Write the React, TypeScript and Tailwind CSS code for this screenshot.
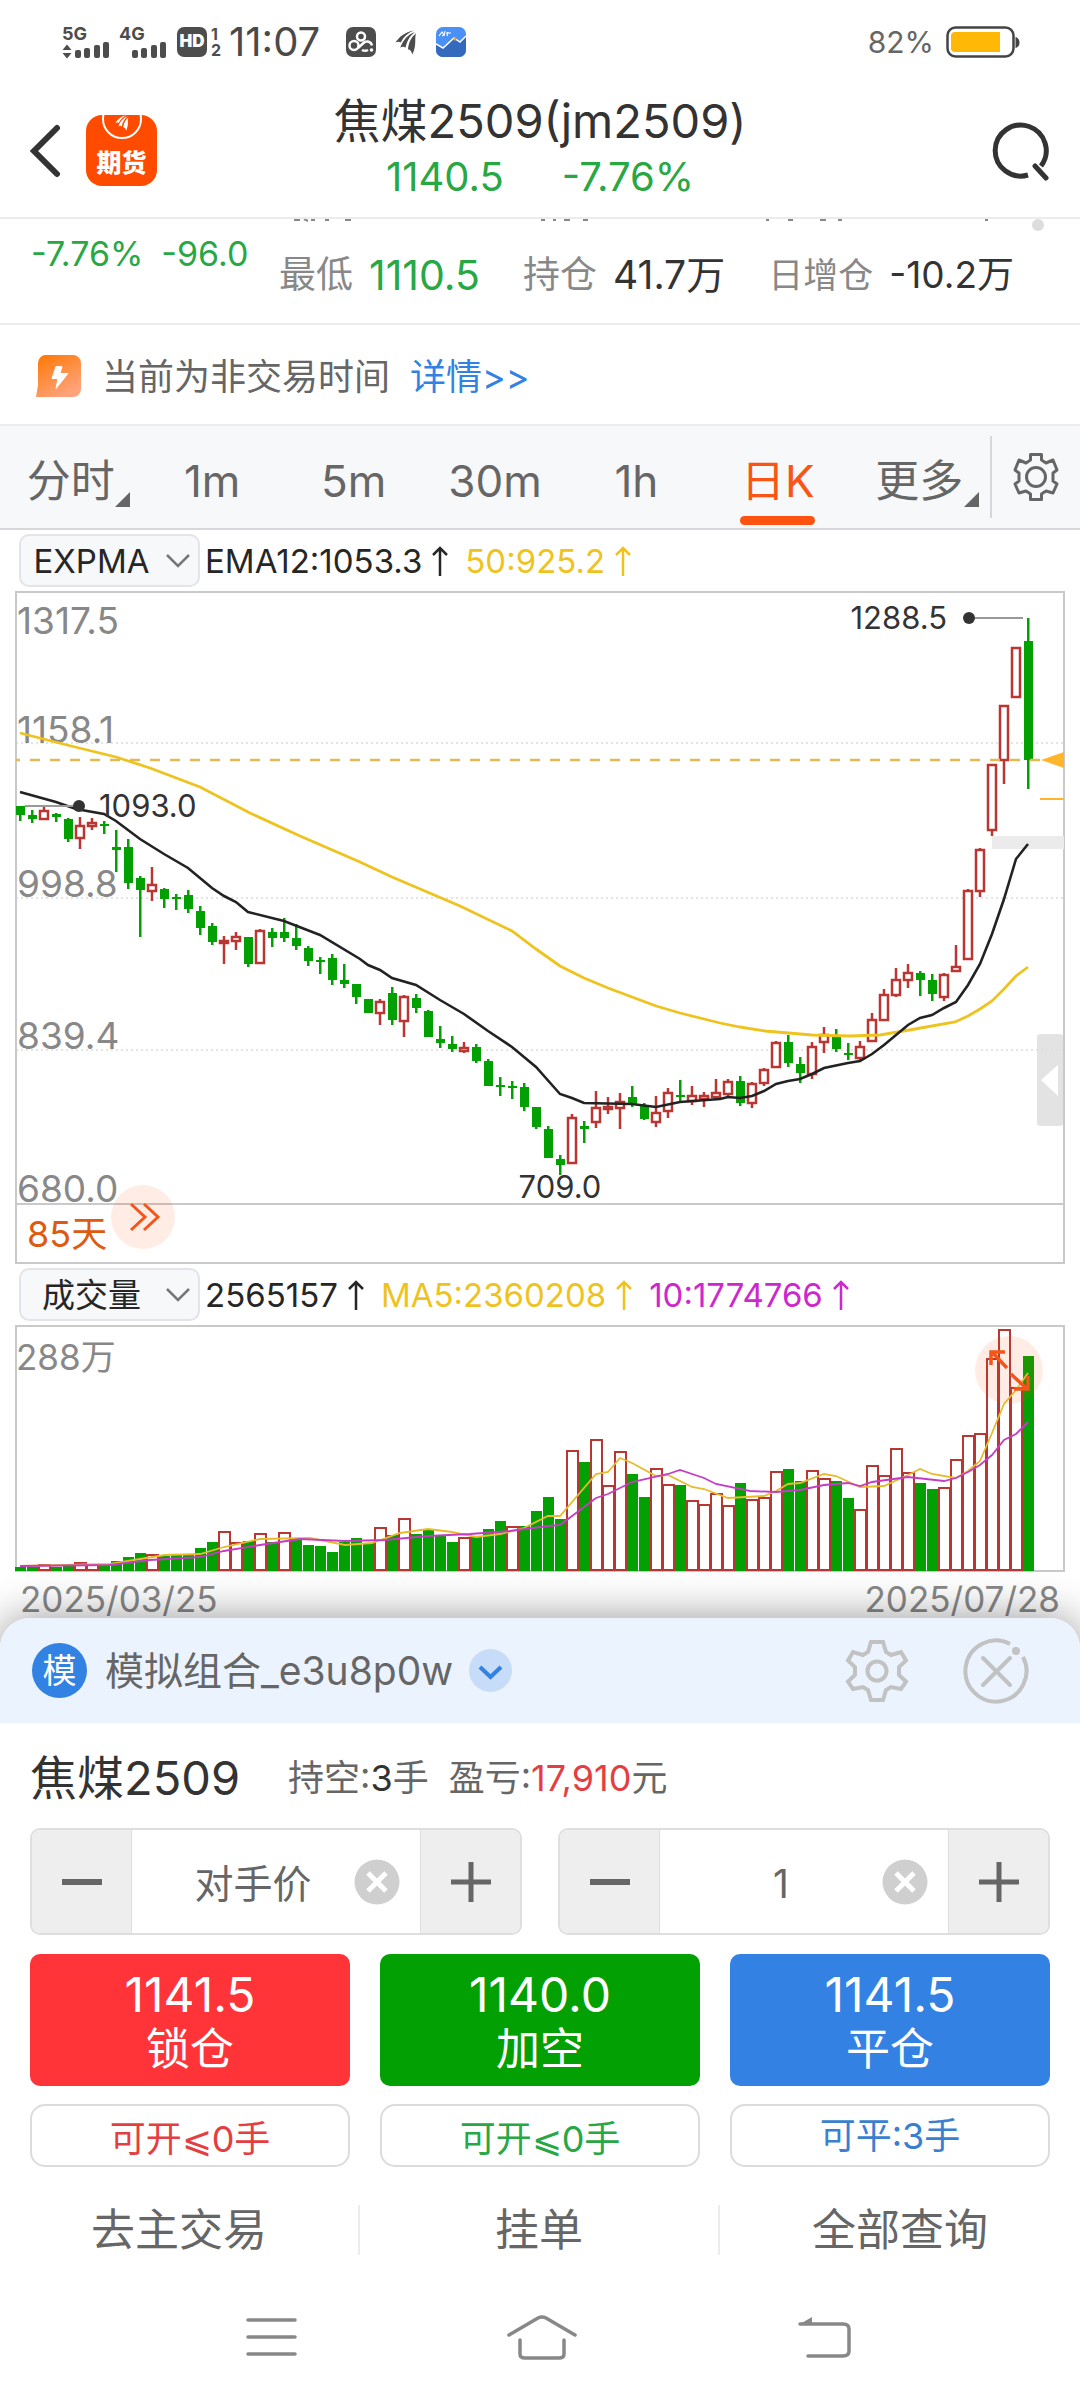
import React, { useState } from "react";

type Candle = [dir: "u" | "d", high: number, top: number, bottom: number, low: number, volume: number, volDir?: "u" | "d"];

/* One entry per trading day: direction, wick top, body top, body bottom, wick bottom, volume bar top */
const DAYS: Candle[] = [
  ["d", 806, 806, 815, 821, 1565], ["d", 810, 815, 819, 823, 1565], ["u", 806, 810, 819, 819, 1563], ["d", 813, 814, 817, 822, 1565],
  ["d", 818, 819, 839, 842, 1563], ["u", 817, 825, 838, 849, 1561], ["u", 818, 822, 826, 830, 1563], ["d", 821, 824, 825, 834, 1564],
  ["d", 830, 847, 850, 872, 1559], ["d", 839, 847, 883, 889, 1555], ["d", 876, 878, 890, 937, 1551], ["u", 867, 884, 891, 901, 1553],
  ["d", 888, 889, 899, 908, 1554], ["d", 894, 897, 898, 910, 1553], ["d", 890, 895, 909, 913, 1553], ["d", 906, 911, 928, 935, 1546],
  ["d", 923, 926, 942, 945, 1540], ["u", 936, 940, 943, 964, 1530], ["u", 932, 936, 941, 950, 1541], ["d", 937, 937, 964, 967, 1539],
  ["u", 929, 930, 963, 963, 1532], ["d", 928, 932, 938, 947, 1540], ["d", 918, 932, 938, 942, 1531, "u"], ["d", 924, 938, 946, 950, 1536],
  ["d", 946, 948, 961, 966, 1543], ["d", 957, 960, 962, 974, 1544], ["d", 954, 958, 980, 985, 1550], ["d", 964, 980, 984, 988, 1540],
  ["d", 984, 984, 997, 1004, 1536], ["d", 999, 999, 1013, 1013, 1541], ["u", 999, 1001, 1013, 1025, 1526], ["d", 987, 993, 1020, 1025, 1533],
  ["u", 995, 996, 1021, 1037, 1517], ["d", 994, 998, 1008, 1013, 1532], ["d", 1010, 1011, 1037, 1037, 1528], ["d", 1026, 1039, 1043, 1048, 1534],
  ["d", 1036, 1044, 1049, 1052, 1540], ["u", 1042, 1047, 1051, 1053, 1536], ["d", 1044, 1047, 1061, 1063, 1534], ["d", 1059, 1061, 1086, 1086, 1527],
  ["d", 1077, 1085, 1087, 1096, 1519], ["d", 1081, 1086, 1088, 1099, 1525, "u"], ["d", 1083, 1087, 1107, 1111, 1524], ["d", 1107, 1107, 1127, 1129, 1509],
  ["d", 1126, 1129, 1158, 1158, 1495], ["d", 1155, 1159, 1165, 1175, 1517], ["u", 1114, 1117, 1163, 1163, 1449], ["d", 1121, 1126, 1129, 1143, 1460],
  ["u", 1091, 1107, 1122, 1128, 1438], ["u", 1097, 1106, 1108, 1114, 1484], ["u", 1093, 1101, 1108, 1129, 1450], ["d", 1086, 1097, 1104, 1107, 1472],
  ["d", 1103, 1106, 1119, 1120, 1495], ["u", 1096, 1112, 1122, 1127, 1467], ["u", 1088, 1092, 1111, 1118, 1483], ["d", 1080, 1095, 1097, 1102, 1483],
  ["u", 1086, 1095, 1101, 1105, 1499], ["u", 1092, 1095, 1099, 1107, 1503], ["u", 1079, 1092, 1097, 1100, 1492], ["u", 1079, 1081, 1094, 1098, 1504],
  ["d", 1076, 1081, 1103, 1106, 1481], ["u", 1082, 1083, 1103, 1108, 1498], ["u", 1068, 1069, 1083, 1086, 1496], ["u", 1041, 1042, 1067, 1067, 1470],
  ["d", 1035, 1042, 1063, 1067, 1467], ["d", 1057, 1064, 1073, 1083, 1479], ["u", 1042, 1046, 1074, 1079, 1469], ["u", 1027, 1034, 1042, 1053, 1477],
  ["d", 1029, 1037, 1049, 1052, 1479], ["d", 1043, 1053, 1054, 1060, 1496], ["u", 1041, 1046, 1058, 1060, 1508], ["u", 1013, 1019, 1041, 1042, 1464],
  ["u", 989, 994, 1020, 1020, 1474], ["u", 968, 979, 995, 997, 1447], ["u", 964, 972, 980, 988, 1471], ["d", 971, 973, 980, 996, 1481],
  ["d", 974, 980, 994, 1001, 1487], ["u", 973, 974, 997, 1001, 1486], ["u", 945, 966, 971, 972, 1458], ["u", 889, 890, 959, 960, 1434],
  ["u", 848, 849, 891, 897, 1432], ["u", 764, 764, 830, 836, 1357], ["u", 705, 705, 760, 784, 1328], ["u", 647, 647, 697, 697, 1386],
  ["d", 618, 641, 760, 789, 1354],
];

const EMA50 =
  "20,733 67,745 116,757 150,768 200,787 250,813 300,836 360,862 392,877 460,906 512,931 536,949 560,966 584,978 608,988 632,997 656,1006 680,1013 720,1023 740,1027 765,1031 812,1035 850,1036 880,1035 915,1029 955,1022 968,1016 980,1009 992,1001 1004,989 1016,976 1028,967";
const EMA12 =
  "20,792 56,802 76,809 104,814 116,821 140,839 164,854 188,868 212,888 224,896 236,902 248,912 284,921 320,935 360,959 368,965 380,970 392,978 416,985 440,1000 464,1014 488,1031 512,1047 536,1067 560,1094 572,1098 584,1103 632,1104 656,1107 680,1102 720,1099 728,1097 740,1098 752,1096 764,1091 776,1084 788,1081 800,1079 812,1074 824,1068 848,1063 860,1061 872,1054 884,1045 896,1035 908,1025 920,1018 932,1015 944,1008 956,1002 968,985 980,964 992,934 1004,899 1016,859 1028,844";
const MA5 =
  "20,1564 110,1562 140,1557 165,1553 200,1552 224,1545 260,1537 310,1536 345,1543 372,1541 400,1531 428,1527 452,1530 476,1535 500,1532 524,1526 548,1514 560,1514 584,1486 596,1472 608,1470 620,1456 632,1461 656,1474 668,1473 692,1485 704,1487 728,1496 764,1494 776,1489 788,1482 800,1481 824,1472 836,1474 860,1485 884,1484 908,1473 920,1467 932,1472 956,1476 968,1469 980,1459 992,1431 1004,1402 1016,1388 1028,1371";
const MA10 =
  "20,1564 110,1563 150,1558 200,1555 224,1549 260,1543 300,1537 345,1539 385,1538 428,1534 470,1532 510,1529 548,1524 560,1523 596,1496 608,1492 632,1480 668,1472 680,1468 704,1476 716,1482 750,1489 776,1490 800,1488 824,1483 848,1481 860,1484 872,1480 908,1475 944,1479 956,1476 968,1470 980,1463 992,1453 1004,1438 1016,1432 1028,1420";

const RED = "#b93632";
const GREEN = "#03a003";

function WingMark({ className }: { className: string }) {
  return (
    <svg viewBox="0 0 24 26" className={className} fill="currentColor" aria-hidden="true">
      <path d="M1 13 C5 7 11 2 20 0.500 C14 3 9.500 7 6.500 13 C5 12 3 12 1 13Z" />
      <path d="M6 18.500 C9 10 14 4.500 21.500 2 C16 6 13 11 11.500 18.500 C10 17 8 17 6 18.500Z" />
      <path d="M14 20 C15 13 17 8 22.500 3.500 C20.500 8 23.500 17 18.500 25.500 C18 22.500 16.500 20.500 14 20Z" />
    </svg>
  );
}

function Signal({ label, arrows }: { label: string; arrows?: boolean }) {
  return (
    <div className="flex w-12 flex-col text-[#4d4d4d]">
      <span className="text-[18px] leading-4 font-bold">{label}</span>
      <svg viewBox="0 0 48 17" className="h-[17px] w-12" fill="currentColor" aria-hidden="true">
        {arrows && <path d="M0.500 8 L5 2.500 L9.500 8Z M0.500 11 L5 16.500 L9.500 11Z" />}
        <rect x="13" y="8" width="6" height="8" rx="2" />
        <rect x="22" y="6" width="6" height="10" rx="2" />
        <rect x="32" y="3" width="6" height="13" rx="2" />
        <rect x="41" y="0" width="6" height="16" rx="2" />
      </svg>
    </div>
  );
}

function StatusBar() {
  return (
    <div className="flex h-[84px] items-center pr-[60px] pl-[62px]">
      <Signal label="5G" arrows />
      <div className="ml-[9px]"><Signal label="4G" /></div>
      <div className="ml-[10px] flex items-center gap-1 text-[#4d4d4d]">
        <span className="flex size-[30px] items-center justify-center rounded-[7px] bg-[#4d4d4d] text-[17px] font-black text-white">HD</span>
        <span className="flex flex-col text-[16px] leading-4 font-bold"><span>1</span><span>2</span></span>
      </div>
      <span className="ml-2 text-[40px] leading-10 text-[#4a4a4a]">11:07</span>
      <svg viewBox="0 0 30 30" className="ml-[26px] size-[30px]" aria-hidden="true">
        <rect width="30" height="30" rx="7" fill="#4d4d4d" />
        <g fill="none" stroke="#fff" strokeWidth="2.500">
          <circle cx="15" cy="9.500" r="4" />
          <circle cx="8" cy="18.500" r="4.500" />
          <path d="M12 21 L18 15.500 a5 5 0 0 1 8 3" />
          <path d="M16 23 q3 1.500 6 0" />
        </g>
        <circle cx="25.500" cy="23" r="1.800" fill="#fff" />
      </svg>
      <WingMark className="ml-[18px] h-[25px] w-6 text-[#4d4d4d]" />
      <svg viewBox="0 0 30 30" className="ml-[18px] size-[30px]" aria-hidden="true">
        <rect width="30" height="30" rx="7" fill="#4a90f5" />
        <path d="M0 17 L7 21 L18 11 L24 15 L30 9 V23 a7 7 0 0 1 -7 7 H7 a7 7 0 0 1 -7 -7Z" fill="#3569bd" />
        <path d="M0 17 L7 21 L18 11 L24 15 L30 9" fill="none" stroke="#fff" strokeWidth="1.500" />
        <path d="M3 9 l3 -4 2 3 -2 1 M9 4 l-1 5 M10 6 h5 M12 5 l-1 4" fill="none" stroke="#fff" strokeWidth="1.200" />
        <circle cx="19" cy="12" r="1.500" fill="#f0a040" />
      </svg>
      <span className="ml-auto text-[30px] leading-9 text-[#666]">82%</span>
      <svg viewBox="0 0 74 32" className="ml-3 h-8 w-[74px]" aria-hidden="true">
        <rect x="1.500" y="1.500" width="66" height="29" rx="8" fill="none" stroke="#444" strokeWidth="2.500" />
        <path d="M9 6 H54 V26 H9 a4 4 0 0 1 -4 -4 V10 a4 4 0 0 1 4 -4Z" fill="#ffb806" />
        <path d="M69.500 11 q4 1 4 5.500 t-4 5.500Z" fill="#444" />
      </svg>
    </div>
  );
}

function Header() {
  return (
    <header className="flex h-[135px] items-center border-b-2 border-[#ececec] px-7">
      <div className="flex flex-1 items-center gap-6">
        <button aria-label="返回" className="text-[#333]">
          <svg viewBox="0 0 34 54" className="h-[54px] w-[34px]" fill="none" stroke="currentColor" strokeWidth="6" strokeLinecap="round">
            <path d="M29 4 L6 27 L29 50" />
          </svg>
        </button>
        <div className="flex size-[71px] flex-col items-center overflow-hidden rounded-2xl bg-[#ff4b00] text-white">
          <div className="-mt-4 flex h-10 w-10 shrink-0 items-end justify-center rounded-full border-2 border-white pb-[6px]">
            <WingMark className="h-4 w-4" />
          </div>
          <span className="mt-2 text-[25px] leading-8 font-black">期货</span>
        </div>
      </div>
      <div className="flex flex-col items-center pb-3">
        <h1 className="text-[47px] leading-[64px] text-[#333]">焦煤2509(jm2509)</h1>
        <p className="flex gap-[58px] text-[40px] leading-[48px] text-[#28a745]"><span>1140.5</span><span>-7.76%</span></p>
      </div>
      <div className="flex flex-1 justify-end">
        <button aria-label="搜索" className="text-[#333]">
          <svg viewBox="0 0 60 60" className="size-[60px]" fill="none" stroke="currentColor" strokeWidth="5" strokeLinecap="round">
            <path d="M36 54 A25.500 25.500 0 1 1 49 45" strokeLinecap="butt" />
            <path d="M43 45 L54 57" />
          </svg>
        </button>
      </div>
    </header>
  );
}

function Quote() {
  return (
    <section className="relative flex h-[106px] items-start border-b-2 border-[#ececec] text-[37px] leading-[54px] text-[#333]">
      <svg viewBox="0 0 1080 4" className="absolute inset-x-0 top-0 h-1 w-full" stroke="#888" strokeWidth="2" aria-hidden="true">
        <path d="M294 1 h6 M304 0 l4 2 M311 1 h4 M325 1 h4 M345 1 h6 M541 1 h4 M553 1 h3 M564 1 h6 M583 1 h5 M766 1 h3 M788 1 h5 M820 1 h6 M838 1 h4 M985 1 h3" />
      </svg>
      <span className="absolute top-0 right-9 size-3 rounded-full bg-[#ddd]" />
      <p className="flex w-[279px] shrink-0 gap-[18px] pt-2 pl-[31px] text-[34px] text-[#28a745]"><span>-7.76%</span><span>-96.0</span></p>
      <dl className="flex flex-1 justify-between pt-[29px] pr-[66px]">
        <div className="flex gap-4"><dt className="text-[#888]">最低</dt><dd className="text-[41px] text-[#28a745]">1110.5</dd></div>
        <div className="flex gap-4"><dt className="text-[#888]">持仓</dt><dd className="text-[39px]">41.7万</dd></div>
        <div className="flex gap-4"><dt className="text-[35px] text-[#888]">日增仓</dt><dd>-10.2万</dd></div>
      </dl>
    </section>
  );
}

function Notice() {
  return (
    <section className="flex h-[99px] items-center pt-1 pl-9 text-[36px] leading-[50px] text-[#666]">
      <svg viewBox="0 0 46 44" className="h-11 w-[46px]" aria-hidden="true">
        <defs>
          <linearGradient id="flash" x1="0" y1="0" x2="0.600" y2="1">
            <stop offset="0" stopColor="#ff7700" />
            <stop offset="1" stopColor="#ffa37c" />
          </linearGradient>
        </defs>
        <path d="M9 0 H37 a8 8 0 0 1 8 8 V34 a8 8 0 0 1 -8 8 H0 L2 30 V8 a8 8 0 0 1 7 -8Z" fill="url(#flash)" />
        <path d="M20 11.500 h6 l-2 7 h8 L20 33.500 l2 -10 h-6Z" fill="#fff" stroke="#fff" strokeLinejoin="round" />
      </svg>
      <span className="ml-5">当前为非交易时间</span>
      <a href="#detail" className="ml-5 text-[#3182e2]">详情&gt;&gt;</a>
    </section>
  );
}

const TABS = ["分时", "1m", "5m", "30m", "1h", "日K", "更多"];

function PeriodTabs() {
  const [active, setActive] = useState("日K");
  return (
    <nav className="flex h-[106px] items-center border-y-2 border-t-[#ececec] border-b-[#d5d7da] bg-[#f7f8fa]">
      <div className="flex h-full flex-1" role="tablist">
        {TABS.map((tab) => (
          <button
            key={tab}
            role="tab"
            aria-selected={tab === active}
            onClick={() => setActive(tab)}
            className={
              tab === active
                ? "relative flex h-full flex-1 items-center justify-center pt-2 text-[44px] leading-[60px] text-[#fa5514]"
                : "relative flex h-full flex-1 items-center justify-center pt-2 text-[44px] leading-[60px] text-[#666]"
            }
          >
            {tab}
            {(tab === "分时" || tab === "更多") && (
              <svg viewBox="0 0 15 15" className="absolute right-[11px] bottom-[21px] size-[15px]" fill="currentColor" aria-hidden="true">
                <path d="M15 0 V15 H0Z" />
              </svg>
            )}
            {tab === active && <span className="absolute bottom-[3px] h-[9px] w-[75px] rounded-full bg-[#fd5210]" />}
          </button>
        ))}
      </div>
      <button aria-label="设置" className="flex h-[82px] w-[90px] items-center justify-center border-l-2 border-[#d5d7da] text-[#666]">
        <svg viewBox="-25 -26 50 52" className="h-[52px] w-[50px]" fill="none" stroke="currentColor" strokeWidth="3" strokeLinejoin="round" aria-hidden="true">
          <path d="M-5.500 -22.500 H5.500 V-17 L10 -14 L17 -17 L21 -7 L17 -4 V4 L21 7 L17 16 L10 14 L5.500 17 V22.500 H-5.500 V17 L-10 14 L-17 16 L-21 7 L-17 4 V-4 L-21 -7 L-17 -17 L-10 -14 L-5.500 -17Z" />
          <circle r="9.500" />
        </svg>
      </button>
    </nav>
  );
}

function IndicatorSelect({ label, value, children }: { label: string; value: string; children?: React.ReactNode }) {
  return (
    <div className="flex h-[61px] items-center px-[19px] text-[33px] leading-[50px] text-[#262626]">
      <div className="relative mr-[5px] w-[181px] shrink-0">
        <select aria-label={label} className="h-[53px] w-full appearance-none rounded-[10px] border-2 border-[#e3e4e8] bg-[#f7f8fa] pr-9 text-center leading-[50px] outline-none">
          <option>{value}</option>
        </select>
        <svg viewBox="0 0 24 14" className="pointer-events-none absolute top-5 right-[10px] h-[14px] w-6" fill="none" stroke="#777" strokeWidth="2.500" aria-hidden="true">
          <path d="M1 1 L12 12 L23 1" />
        </svg>
      </div>
      {children}
    </div>
  );
}

function Reading({ text, color }: { text: string; color: string }) {
  return (
    <span className="mr-[17px] flex items-center gap-[10px] whitespace-nowrap" style={{ color }}>
      {text}
      <svg viewBox="0 0 16 30" className="h-[30px] w-4" fill="none" stroke="currentColor" strokeWidth="2.500" role="img" aria-label="上升">
        <path d="M8 30 V2 M1 9 L8 2 L15 9" />
      </svg>
    </span>
  );
}

function PriceChart() {
  return (
    <svg viewBox="0 591 1080 673" className="block w-full" role="img" aria-label="焦煤2509 日K线">
      <g stroke="#c9c9c9" strokeWidth="2" fill="none">
        <rect x="16" y="592" width="1048" height="671" />
        <path d="M16 1204 H1064" />
        <path d="M16 743 H1064 M16 898 H1064 M16 1050 H1064" strokeDasharray="2 3" strokeWidth="1" />
      </g>
      <rect x="992" y="836" width="72" height="13" fill="#ebebeb" />
      <g fontSize="37" fill="#888">
        <text x="17" y="634">1317.5</text>
        <text x="17" y="743">1158.1</text>
        <text x="17" y="897">998.8</text>
        <text x="17" y="1049">839.4</text>
        <text x="17" y="1202">680.0</text>
      </g>
      <text x="27" y="1247" fontSize="36" fill="#dd5a10">85天</text>
      {DAYS.map(([dir, high, top, bottom, low], i) => {
        const x = 20 + i * 12;
        return dir === "u" ? (
          <g key={i} stroke={RED} strokeWidth="2.500" fill="#fff">
            <path d={`M${x} ${high} V${low}`} />
            <rect x={x - 4} y={top + 1} width="8" height={Math.max(bottom - top - 1, 2)} />
          </g>
        ) : (
          <g key={i} fill={GREEN}>
            <rect x={x - 1} y={high} width="2.500" height={low - high} />
            <rect x={x - 4} y={top} width="9" height={Math.max(bottom - top, 2)} />
          </g>
        );
      })}
      <path d="M16 760 H1040" stroke="#dfba55" strokeWidth="2.500" strokeDasharray="10 10" strokeDashoffset="6" />
      <path d="M1041 760 L1064 752 V768Z" fill="#ffb52b" />
      <path d="M1040 799 H1064" stroke="#ffb52b" strokeWidth="2" />
      <polyline points={EMA50} fill="none" stroke="#efc31e" strokeWidth="2.800" />
      <polyline points={EMA12} fill="none" stroke="#222" strokeWidth="2.600" />
      <g stroke="#999" strokeWidth="2">
        <path d="M25 806 H79 M969 618 H1023" />
      </g>
      <g fill="#333" fontSize="31">
        <circle cx="79" cy="806" r="6" />
        <circle cx="969" cy="618" r="6" />
        <text x="99" y="817">1093.0</text>
        <text x="947" y="629" textAnchor="end">1288.5</text>
        <text x="560" y="1198" textAnchor="middle">709.0</text>
      </g>
      <rect x="1037" y="1034" width="26" height="92" rx="3" fill="#dcdcdc" fillOpacity="0.8" />
      <path d="M1041 1080 L1058 1065 V1096Z" fill="#fff" />
      <circle cx="143" cy="1217" r="32" fill="#ff4b00" fillOpacity="0.1" />
      <path d="M131 1204 L145 1217 L131 1230 M144 1204 L158 1217 L144 1230" fill="none" stroke="#f4551a" strokeWidth="3" />
    </svg>
  );
}

function VolumeChart() {
  return (
    <svg viewBox="0 1323 1080 247" className="block w-full" role="img" aria-label="成交量">
      <rect x="16" y="1324" width="1048" height="245" stroke="#c9c9c9" strokeWidth="2" fill="none" />
      <text x="16" y="1368" fontSize="35" fill="#888">288万</text>
      {DAYS.map(([dir, , , , , top, volDir], i) => {
        const x = 20 + i * 12;
        return (volDir ?? dir) === "u" ? (
          <rect key={i} x={x - 5} y={top} width="11" height={1568 - top} fill="#fff" stroke={RED} strokeWidth="2" />
        ) : (
          <rect key={i} x={x - 5} y={top} width="11" height={1569 - top} fill={GREEN} />
        );
      })}
      <circle cx="1009" cy="1368" r="34" fill="#ff4b00" fillOpacity="0.1" />
      <polyline points={MA5} fill="none" stroke="#e8bb2c" strokeWidth="1.800" />
      <polyline points={MA10} fill="none" stroke="#c53cc5" strokeWidth="1.800" />
      <path d="M1007 1366 L992 1350 M991 1363 V1350 H1005 M1011 1372 L1027 1387 M1028 1374 V1387 H1014" fill="none" stroke="#f4551a" strokeWidth="3.500" />
    </svg>
  );
}

function Stepper({ label, initial }: { label: string; initial: string }) {
  const [value, setValue] = useState(initial);
  return (
    <div className="flex h-[107px] flex-1 overflow-hidden rounded-[10px] border-2 border-[#dedede]">
      <button aria-label={`${label}减`} className="flex w-[100px] shrink-0 items-center justify-center border-r border-[#dedede] bg-[#eee]">
        <span className="h-[6px] w-10 bg-[#666]" />
      </button>
      <input aria-label={label} value={value} onChange={(e) => setValue(e.target.value)} className="w-0 min-w-0 flex-1 pt-1 pl-5 text-center text-[39px] leading-[50px] text-[#666] outline-none" />
      <button aria-label={`清除${label}`} onClick={() => setValue("")} className="mr-5 flex shrink-0 items-center">
        <svg viewBox="0 0 46 46" className="size-[46px]" aria-hidden="true">
          <circle cx="23" cy="23" r="22.500" fill="#cfcfcf" />
          <path d="M14 14 L32 32 M32 14 L14 32" stroke="#fff" strokeWidth="5" />
        </svg>
      </button>
      <button aria-label={`${label}加`} className="flex w-[100px] shrink-0 items-center justify-center border-l border-[#dedede] bg-[#eee] text-[#666]">
        <svg viewBox="0 0 40 40" className="size-10" stroke="currentColor" strokeWidth="5" aria-hidden="true">
          <path d="M0 20 H40 M20 0 V40" />
        </svg>
      </button>
    </div>
  );
}

const ORDERS = [
  { price: "1141.5", action: "锁仓", tone: "bg-[#fe3439]" },
  { price: "1140.0", action: "加空", tone: "bg-[#03a003]" },
  { price: "1141.5", action: "平仓", tone: "bg-[#3382e3]" },
];

function TradePanel() {
  return (
    <section className="relative flex-1 rounded-t-[30px] bg-white shadow-[0_0_44px_rgba(0,0,0,0.42)]">
      <header className="flex h-[105px] items-center rounded-t-[30px] bg-[#ebf3ff] pr-[51px] pl-8">
        <span className="flex size-[55px] items-center justify-center rounded-full bg-[#3182e2] text-[34px] leading-[50px] text-white">模</span>
        <button className="ml-[18px] flex items-center gap-4">
          <span className="text-[39px] leading-[50px] text-[#666]">模拟组合_e3u8p0w</span>
          <svg viewBox="0 0 43 43" className="size-[43px]" aria-hidden="true">
            <circle cx="21.500" cy="21.500" r="21.500" fill="#c6dcf8" />
            <path d="M11 18 L21.500 28 L32 18" fill="none" stroke="#3182e2" strokeWidth="4" />
          </svg>
        </button>
        <button aria-label="交易设置" className="ml-auto text-[#c2c2c2]">
          <svg viewBox="-33 -33 66 66" className="size-[66px]" fill="none" stroke="currentColor" strokeWidth="4" aria-hidden="true">
            <path d="M-6 -29 H6 L9 -19 L14 -16 L24 -19 L29 -10.500 L22 -4 V4 L29 10.500 L24 18 L14 16 L9 19 L6 29 H-6 L-9 19 L-14 16 L-24 18 L-29 10.500 L-22 4 V-4 L-29 -10.500 L-24 -19 L-14 -16 L-9 -19Z" />
            <circle r="9.500" />
          </svg>
        </button>
        <button aria-label="关闭" className="ml-[53px] text-[#c2c2c2]">
          <svg viewBox="-33 -33 66 66" className="size-[66px]" fill="none" stroke="currentColor" strokeWidth="4" aria-hidden="true">
            <path d="M14 -27 A30.500 30.500 0 1 0 27 -14" />
            <path d="M-13 -13 L14 14 M14 -13 L-13 14" strokeLinecap="round" />
            <circle cx="20" cy="-20" r="4" fill="currentColor" stroke="none" />
          </svg>
        </button>
      </header>
      <div className="flex h-[105px] items-center px-[30px] pt-1 text-[36px] leading-[50px] text-[#666]">
        <h2 className="mr-[48px] text-[47px] leading-[60px] text-[#333]">焦煤2509</h2>
        <p className="mr-5">持空:<span className="text-[#333]">3</span>手</p>
        <p>盈亏:<span className="text-[#e53e41]">17,910</span>元</p>
      </div>
      <div className="flex gap-9 px-[30px]">
        <Stepper label="价格" initial="对手价" />
        <Stepper label="数量" initial="1" />
      </div>
      <div className="mt-[19px] grid grid-cols-3 gap-x-[30px] gap-y-[18px] px-[30px]">
        {ORDERS.map(({ price, action, tone }) => (
          <button key={action} className={`h-[132px] rounded-[10px] pt-1 text-[44px] leading-[55px] text-white ${tone}`}>
            <span className="block text-[48px]">{price}</span>
            <span className="block">{action}</span>
          </button>
        ))}
        <p className="h-[63px] rounded-[15px] border-2 border-[#dcdcdc] text-center text-[36px] leading-[60px] text-[#e53e41]">可开<span className="font-['Noto_Sans_CJK_SC']">⩽</span>0手</p>
        <p className="h-[63px] rounded-[15px] border-2 border-[#dcdcdc] text-center text-[36px] leading-[60px] text-[#28a745]">可开<span className="font-['Noto_Sans_CJK_SC']">⩽</span>0手</p>
        <p className="h-[63px] rounded-[15px] border-2 border-[#dcdcdc] text-center text-[36px] leading-[60px] text-[#3a7fd0]">可平:3手</p>
      </div>
      <div className="mt-[38px] grid grid-cols-3 divide-x-2 divide-[#ececec] text-center text-[44px] leading-[50px] text-[#666]">
        <a href="#trade">去主交易</a>
        <a href="#orders">挂单</a>
        <a href="#query">全部查询</a>
      </div>
      <nav className="flex h-[146px] items-center justify-between pt-5 pr-[228px] pl-[243px] text-[#888]">
        <button aria-label="最近任务">
          <svg viewBox="0 0 56 44" className="h-11 w-14" stroke="currentColor" strokeWidth="3.500" strokeLinecap="round"><path d="M5 4 H52 M5 21 H52 M5 38 H52" /></svg>
        </button>
        <button aria-label="主页">
          <svg viewBox="0 0 74 46" className="h-[46px] w-[74px]" fill="none" stroke="currentColor" strokeWidth="3.500" strokeLinecap="round" strokeLinejoin="round">
            <path d="M4 20 L33 3 Q37 1 41 3 L70 20" />
            <path d="M15 25 V39 Q15 43 20 43 H54 Q59 43 59 39 V25" />
          </svg>
        </button>
        <button aria-label="返回上级" className="pl-3">
          <svg viewBox="0 0 56 46" className="h-[46px] w-14" fill="none" stroke="currentColor" strokeWidth="3.500" strokeLinecap="round" strokeLinejoin="round">
            <path d="M4 9 H47 Q53 9 53 14 V36 Q53 41 47 41 H12" />
            <path d="M4 9 L16 2 V9Z" fill="currentColor" stroke="none" />
          </svg>
        </button>
      </nav>
    </section>
  );
}

export default function App() {
  return (
    <main className="flex min-h-screen flex-col overflow-hidden bg-white font-['Inter','Noto_Sans_CJK_SC',sans-serif]">
      <StatusBar />
      <Header />
      <Quote />
      <Notice />
      <PeriodTabs />
      <IndicatorSelect label="主图指标" value="EXPMA">
        <Reading text="EMA12:1053.3" color="#262626" />
        <Reading text="50:925.2" color="#efc31e" />
      </IndicatorSelect>
      <PriceChart />
      <IndicatorSelect label="副图指标" value="成交量">
        <Reading text="2565157" color="#262626" />
        <Reading text="MA5:2360208" color="#efc31e" />
        <Reading text="10:1774766" color="#cd28cd" />
      </IndicatorSelect>
      <VolumeChart />
      <div className="flex h-[46px] items-center justify-between px-5 pt-2 text-[35px] leading-10 text-[#888]">
        <time dateTime="2025-03-25">2025/03/25</time>
        <time dateTime="2025-07-28">2025/07/28</time>
      </div>
      <TradePanel />
    </main>
  );
}
